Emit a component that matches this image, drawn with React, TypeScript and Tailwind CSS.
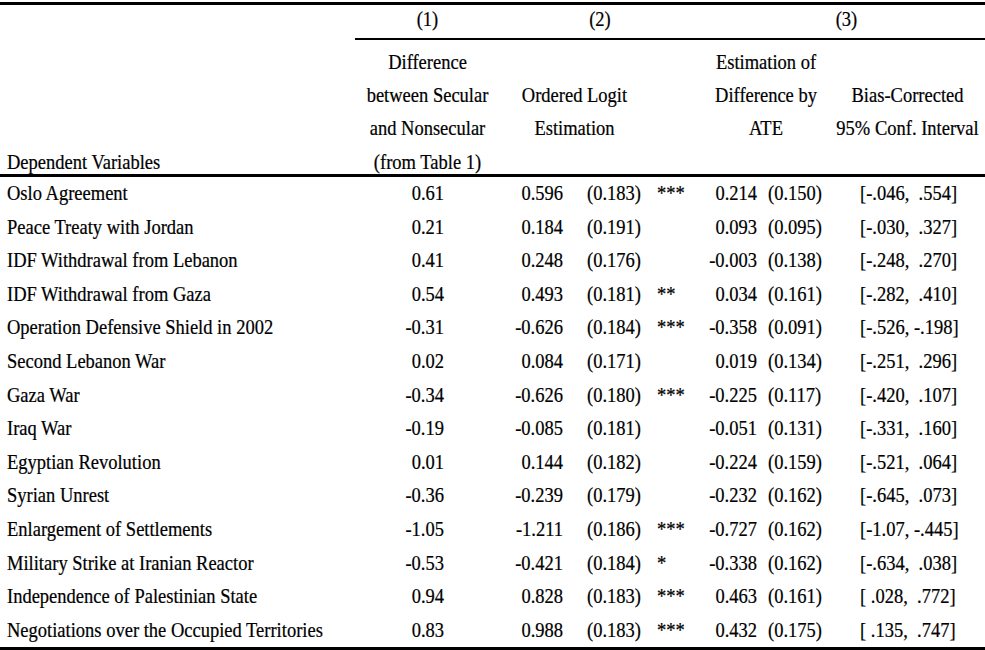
const rows = [
  ["Oslo Agreement", "0.61", "0.596", "(0.183)", "***", "0.214", "(0.150)", "[-.046,  .554]"],
  ["Peace Treaty with Jordan", "0.21", "0.184", "(0.191)", "", "0.093", "(0.095)", "[-.030,  .327]"],
  ["IDF Withdrawal from Lebanon", "0.41", "0.248", "(0.176)", "", "-0.003", "(0.138)", "[-.248,  .270]"],
  ["IDF Withdrawal from Gaza", "0.54", "0.493", "(0.181)", "**", "0.034", "(0.161)", "[-.282,  .410]"],
  ["Operation Defensive Shield in 2002", "-0.31", "-0.626", "(0.184)", "***", "-0.358", "(0.091)", "[-.526, -.198]"],
  ["Second Lebanon War", "0.02", "0.084", "(0.171)", "", "0.019", "(0.134)", "[-.251,  .296]"],
  ["Gaza War", "-0.34", "-0.626", "(0.180)", "***", "-0.225", "(0.117)", "[-.420,  .107]"],
  ["Iraq War", "-0.19", "-0.085", "(0.181)", "", "-0.051", "(0.131)", "[-.331,  .160]"],
  ["Egyptian Revolution", "0.01", "0.144", "(0.182)", "", "-0.224", "(0.159)", "[-.521,  .064]"],
  ["Syrian Unrest", "-0.36", "-0.239", "(0.179)", "", "-0.232", "(0.162)", "[-.645,  .073]"],
  ["Enlargement of Settlements", "-1.05", "-1.211", "(0.186)", "***", "-0.727", "(0.162)", "[-1.07, -.445]"],
  ["Military Strike at Iranian Reactor", "-0.53", "-0.421", "(0.184)", "*", "-0.338", "(0.162)", "[-.634,  .038]"],
  ["Independence of Palestinian State", "0.94", "0.828", "(0.183)", "***", "0.463", "(0.161)", "[ .028,  .772]"],
  ["Negotiations over the Occupied Territories", "0.83", "0.988", "(0.183)", "***", "0.432", "(0.175)", "[ .135,  .747]"],
]

// column widths: label | (1) | coef | se | stars | est | se | ci  => 985px
const grid = "grid grid-cols-[355px_145px_75px_70px_55px_62px_68px_155px]"
// the scan is a little taller than the font, stretch glyphs to match
const tall = "scale-y-[1.12]"

export default function App() {
  return (
    <div className="w-[985px] h-[650px] overflow-hidden bg-white pt-[2px] text-black text-[18.5px] [-webkit-text-stroke:0.2px_black] font-['Liberation_Serif','Times_New_Roman',serif] whitespace-nowrap">
      <div className="border-t-[3px] border-black">
        {/* column numbers */}
        <div className="flex">
          <div className="w-[355px]" />
          <div className="flex-1 grid grid-cols-[145px_200px_285px] leading-[29px] pb-[4px] border-b-2 border-black text-center">
            <div className={tall}>(1)</div>
            <div className={tall}>(2)</div>
            <div className={`${tall} pl-[8px]`}>(3)</div>
          </div>
        </div>

        {/* header */}
        <div className={`${grid} pt-[11px] pb-[1.5px] leading-[22px] border-b-[3px] border-black`}>
          <div className="flex flex-col justify-end pl-[7px]">
            <span className={tall}>Dependent Variables</span>
          </div>
          <div className="flex flex-col items-center gap-[11.2px]">
            <span className={tall}>Difference</span>
            <span className={tall}>between Secular</span>
            <span className={tall}>and Nonsecular</span>
            <span className={tall}>(from Table 1)</span>
          </div>
          <div className="col-span-2 flex flex-col items-center gap-[11.2px] pt-[33.2px] pl-[4px]">
            <span className={tall}>Ordered Logit</span>
            <span className={tall}>Estimation</span>
          </div>
          <div />
          <div className="col-span-2 flex flex-col items-center gap-[11.2px] pl-[2px]">
            <span className={tall}>Estimation of</span>
            <span className={tall}>Difference by</span>
            <span className={tall}>ATE</span>
          </div>
          <div className="flex flex-col items-center gap-[11.2px] pt-[33.2px]">
            <span className={tall}>Bias-Corrected</span>
            <span className={tall}>95% Conf. Interval</span>
          </div>
        </div>

        {/* body */}
        <div className="border-b-[3px] border-black leading-[33.6px]">
          {rows.map((r) => (
            <div key={r[0]} className={grid}>
              <div className={`${tall} pl-[7px]`}>{r[0]}</div>
              <div className={`${tall} text-right pr-[56px]`}>{r[1]}</div>
              <div className={`${tall} text-right pr-[12px]`}>{r[2]}</div>
              <div className={`${tall} pl-[12px]`}>{r[3]}</div>
              <div className={`${tall} pl-[12px]`}>{r[4]}</div>
              <div className={`${tall} text-right pr-[5px]`}>{r[5]}</div>
              <div className={`${tall} pl-[6px]`}>{r[6]}</div>
              <div className={`${tall} pl-[30px] whitespace-pre`}>{r[7]}</div>
            </div>
          ))}
        </div>
      </div>
    </div>
  )
}
